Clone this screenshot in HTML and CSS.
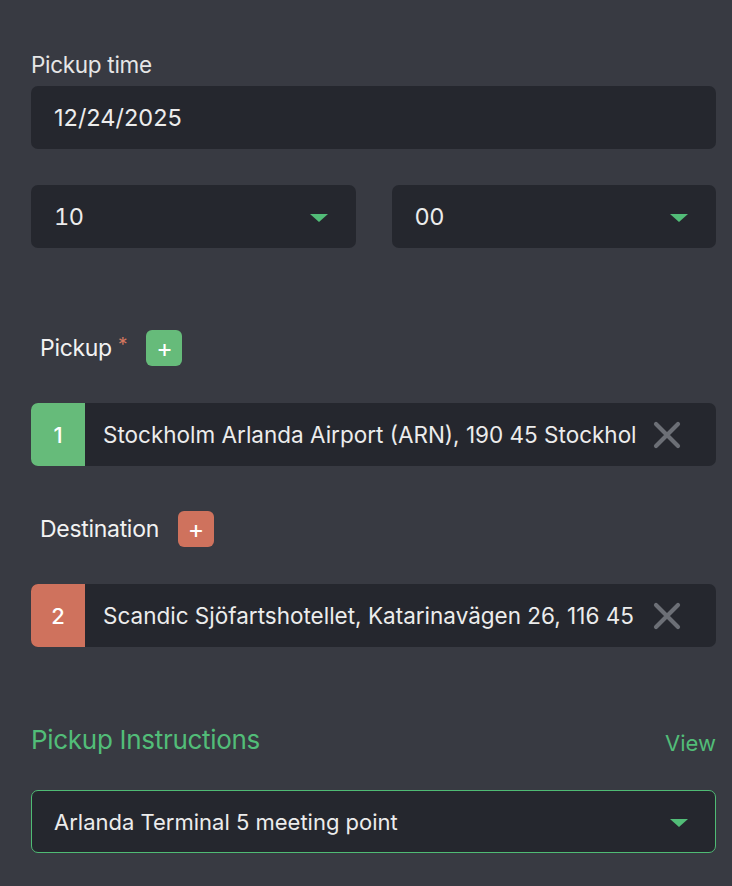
FILE: index.html
```html
<!DOCTYPE html>
<html>
<head>
<meta charset="utf-8">
<link rel="stylesheet" href="styles.css">
</head>
<body>
<div class="page">
  <div class="field">
    <div class="label">Pickup time</div>
    <div class="input date-text">12/24/2025</div>
  </div>
  <div class="time-row">
    <div class="input select num-text"><span>10</span><span class="caret"></span></div>
    <div class="input select num-text"><span>00</span><span class="caret"></span></div>
  </div>

  <div class="stop-head">
    <span class="stop-label">Pickup</span><span class="req">*</span>
    <span class="add add-green">+</span>
  </div>
  <div class="stop">
    <div class="num num-green">1</div>
    <div class="stop-text">Stockholm Arlanda Airport (ARN), 190 45 Stockholm</div>
    <svg class="x" viewBox="0 0 28 28" width="28" height="28"><path d="M3 3L25 25M25 3L3 25" stroke="#6c6f76" stroke-width="4.2" stroke-linecap="round"/></svg>
  </div>

  <div class="stop-head dest-head">
    <span class="stop-label">Destination</span>
    <span class="add add-red">+</span>
  </div>
  <div class="stop">
    <div class="num num-red">2</div>
    <div class="stop-text">Scandic Sjöfartshotellet, Katarinavägen 26, 116 45 Stockholm</div>
    <svg class="x" viewBox="0 0 28 28" width="28" height="28"><path d="M3 3L25 25M25 3L3 25" stroke="#6c6f76" stroke-width="4.2" stroke-linecap="round"/></svg>
  </div>

  <div class="instr-head">
    <span class="instr-title">Pickup Instructions</span>
    <span class="view">View</span>
  </div>
  <div class="input select outlined"><span>Arlanda Terminal 5 meeting point</span><span class="caret"></span></div>
</div>
</body>
</html>
```
FILE: styles.css
```css
html, body {
  margin: 0;
  padding: 0;
  background: #383a42;
}
body {
  font-family: Inter, "Noto Sans", sans-serif;
  color: #ececec;
}
.page {
  padding: 50px 16px 0 31px;
}
.label {
  font-size: 22.5px;
  line-height: 30px;
  color: #e6e6e6;
  margin-bottom: 6px;
  letter-spacing: -0.3px;
}
.input {
  height: 63px;
  box-sizing: border-box;
  background: #25272e;
  border-radius: 7px;
  padding: 0 23px;
  display: flex;
  align-items: center;
  font-size: 22px;
  color: #ececec;
}
.date-text {
  font-size: 23.5px;
  letter-spacing: 0;
}
.num-text {
  font-size: 23.5px;
  font-variant-numeric: tabular-nums;
  letter-spacing: -0.4px;
}
.time-row {
  margin-top: 36px;
  display: grid;
  grid-template-columns: 1fr 1fr;
  gap: 36px;
}
.select {
  justify-content: space-between;
}
.caret {
  width: 0;
  height: 0;
  border-left: 9px solid transparent;
  border-right: 9px solid transparent;
  border-top: 8px solid #52bd78;
  margin-right: 5px;
  margin-top: 3px;
}
.stop-head {
  margin-top: 82px;
  padding-left: 9px;
  display: flex;
  align-items: center;
  height: 36px;
}
.dest-head {
  margin-top: 45px;
}
.stop-label {
  font-size: 23px;
  color: #f2f2f2;
  letter-spacing: -0.3px;
}
.req {
  color: #d4775f;
  font-size: 19px;
  align-self: flex-start;
  margin-left: 6px;
  margin-top: 3px;
}
.add {
  width: 36px;
  height: 36px;
  border-radius: 6px;
  display: flex;
  align-items: center;
  justify-content: center;
  color: #fff;
  font-size: 25px;
  font-weight: 400;
  margin-left: 19px;
}
.add-green { background: #66bb7a; }
.add-red { background: #cf725d; }
.stop {
  margin-top: 37px;
  height: 63px;
  display: flex;
  align-items: center;
  background: #25272e;
  border-radius: 7px;
  overflow: hidden;
}
.num {
  width: 54px;
  align-self: stretch;
  display: flex;
  align-items: center;
  justify-content: center;
  color: #fff;
  font-size: 22px;
  font-weight: 500;
}
.num-green { background: #66bb7a; }
.num-red { background: #cf725d; }
.stop-text {
  flex: 1;
  min-width: 0;
  margin-left: 18px;
  font-size: 22.5px;
  color: #ececec;
  white-space: nowrap;
  overflow: hidden;
  letter-spacing: 0;
}
.x {
  flex: none;
  margin: 0 35px 0 17px;
}
.instr-head {
  margin-top: 77px;
  display: flex;
  justify-content: space-between;
  align-items: baseline;
}
.instr-title {
  font-size: 26px;
  color: #52bd78;
  letter-spacing: -0.3px;
}
.view {
  font-size: 22px;
  color: #52bd78;
  transform: translateY(2px);
}
.outlined {
  margin-top: 35px;
  border: 1px solid #4fbb74;
  padding: 0 22px 0 22px;
}
```
